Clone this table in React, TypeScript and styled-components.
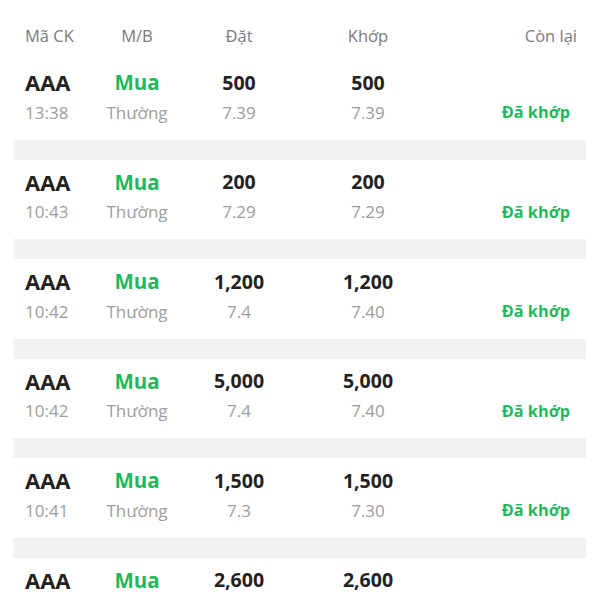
import React from "react";
import styled, { createGlobalStyle } from "styled-components";

const Global = createGlobalStyle`
  html, body { margin: 0; padding: 0; background: #fff; }
  body { font-family: "Open Sans", "Noto Sans", sans-serif; }
`;

const Page = styled.div`
  width: 600px;
  height: 600px;
  overflow: hidden;
  background: #fff;
`;

const Grid = styled.div`
  display: grid;
  grid-template-columns: 62px 100px 104px 154px 1fr;
  align-items: center;
  padding: 0 23px 0 25px;
`;

const Header = styled(Grid)`
  height: 60px;
  padding-top: 10px;
  box-sizing: border-box;
  color: #7b7b7b;
  font-size: 16.5px;
`;

const HeadCell = styled.div<{ $align: string }>`
  text-align: ${(p) => p.$align};
`;

const Row = styled(Grid)`
  height: 79.5px;
  grid-template-rows: 31px 30px;
  align-content: start;
  padding-top: 7px;
  box-sizing: border-box;
`;

const Sep = styled.div`
  height: 20px;
  margin: 0 14px 0 13px;
  background: #f2f2f2;
`;

const Cell = styled.div<{ $align: string; $bold?: boolean; $color?: string; $size?: number }>`
  text-align: ${(p) => p.$align};
  font-weight: ${(p) => (p.$bold ? 700 : 400)};
  color: ${(p) => p.$color || "#222"};
  font-size: ${(p) => p.$size || 17}px;
  line-height: 1.2;
  white-space: nowrap;
`;

const Status = styled(Cell)`
  padding-right: 7px;
`;

const GREEN = "#1fb85a";
const GRAY = "#9d9d9d";

const data = [
  { time: "13:38", qty: "500", price: "7.39", mqty: "500", mprice: "7.39" },
  { time: "10:43", qty: "200", price: "7.29", mqty: "200", mprice: "7.29" },
  { time: "10:42", qty: "1,200", price: "7.4", mqty: "1,200", mprice: "7.40" },
  { time: "10:42", qty: "5,000", price: "7.4", mqty: "5,000", mprice: "7.40" },
  { time: "10:41", qty: "1,500", price: "7.3", mqty: "1,500", mprice: "7.30" },
  { time: "10:40", qty: "2,600", price: "7.3", mqty: "2,600", mprice: "7.30" },
];

export default function App() {
  return (
    <Page>
      <Global />
      <Header>
        <HeadCell $align="left">Mã CK</HeadCell>
        <HeadCell $align="center">M/B</HeadCell>
        <HeadCell $align="center">Đặt</HeadCell>
        <HeadCell $align="center">Khớp</HeadCell>
        <HeadCell $align="right">Còn lại</HeadCell>
      </Header>
      {data.map((d, i) => (
        <React.Fragment key={i}>
          {i > 0 && <Sep />}
          <Row>
            <Cell $align="left" $bold $size={22}>AAA</Cell>
            <Cell $align="center" $bold $color={GREEN} $size={20.5}>Mua</Cell>
            <Cell $align="center" $bold $size={19.5}>{d.qty}</Cell>
            <Cell $align="center" $bold $size={19.5}>{d.mqty}</Cell>
            <Cell $align="right"></Cell>
            <Cell $align="left" $color={GRAY}>{d.time}</Cell>
            <Cell $align="center" $color={GRAY}>Thường</Cell>
            <Cell $align="center" $color={GRAY}>{d.price}</Cell>
            <Cell $align="center" $color={GRAY}>{d.mprice}</Cell>
            <Status $align="right" $bold $color={GREEN} $size={16.3}>Đã khớp</Status>
          </Row>
        </React.Fragment>
      ))}
    </Page>
  );
}
